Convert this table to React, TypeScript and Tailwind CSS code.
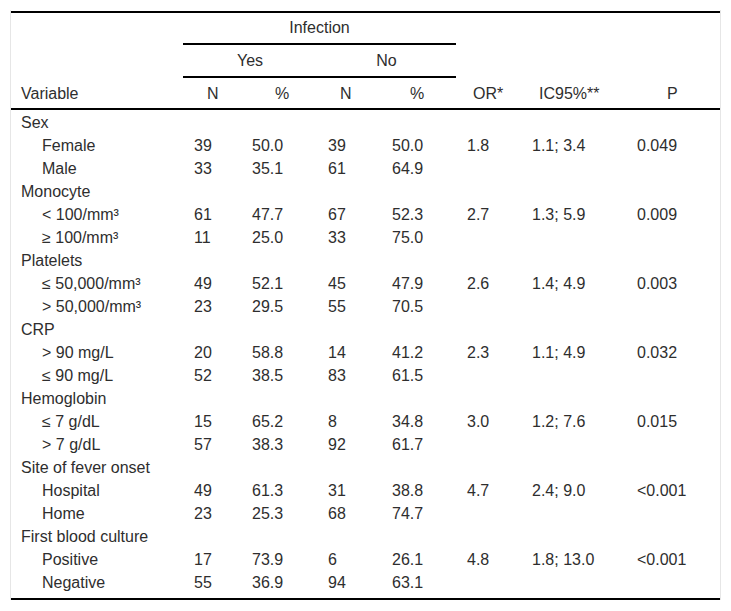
type Row = { label: string; sub?: boolean; n1?: string; p1?: string; n2?: string; p2?: string; or?: string; ic?: string; p?: string };

const rows: Row[] = [
  { label: "Sex" },
  { label: "Female", sub: true, n1: "39", p1: "50.0", n2: "39", p2: "50.0", or: "1.8", ic: "1.1; 3.4", p: "0.049" },
  { label: "Male", sub: true, n1: "33", p1: "35.1", n2: "61", p2: "64.9" },
  { label: "Monocyte" },
  { label: "< 100/mm³", sub: true, n1: "61", p1: "47.7", n2: "67", p2: "52.3", or: "2.7", ic: "1.3; 5.9", p: "0.009" },
  { label: "≥ 100/mm³", sub: true, n1: "11", p1: "25.0", n2: "33", p2: "75.0" },
  { label: "Platelets" },
  { label: "≤ 50,000/mm³", sub: true, n1: "49", p1: "52.1", n2: "45", p2: "47.9", or: "2.6", ic: "1.4; 4.9", p: "0.003" },
  { label: "> 50,000/mm³", sub: true, n1: "23", p1: "29.5", n2: "55", p2: "70.5" },
  { label: "CRP" },
  { label: "> 90 mg/L", sub: true, n1: "20", p1: "58.8", n2: "14", p2: "41.2", or: "2.3", ic: "1.1; 4.9", p: "0.032" },
  { label: "≤ 90 mg/L", sub: true, n1: "52", p1: "38.5", n2: "83", p2: "61.5" },
  { label: "Hemoglobin" },
  { label: "≤ 7 g/dL", sub: true, n1: "15", p1: "65.2", n2: "8", p2: "34.8", or: "3.0", ic: "1.2; 7.6", p: "0.015" },
  { label: "> 7 g/dL", sub: true, n1: "57", p1: "38.3", n2: "92", p2: "61.7" },
  { label: "Site of fever onset" },
  { label: "Hospital", sub: true, n1: "49", p1: "61.3", n2: "31", p2: "38.8", or: "4.7", ic: "2.4; 9.0", p: "<0.001" },
  { label: "Home", sub: true, n1: "23", p1: "25.3", n2: "68", p2: "74.7" },
  { label: "First blood culture" },
  { label: "Positive", sub: true, n1: "17", p1: "73.9", n2: "6", p2: "26.1", or: "4.8", ic: "1.8; 13.0", p: "<0.001" },
  { label: "Negative", sub: true, n1: "55", p1: "36.9", n2: "94", p2: "63.1" },
];

const cols = "grid grid-cols-[172px_58px_76px_64px_75px_65px_105px_94px]";

export default function App() {
  return (
    <div className="min-h-screen bg-white pt-[10px] pl-[10px] font-['Liberation_Sans',Arial,sans-serif] text-[16px] text-[#2e2e2e]">
      <div className="w-[711px] border-x border-[#e6e6e6] pt-px">
        <div className="border-t-2 border-black">
          {/* header row 1 */}
          <div className={cols}>
            <div className="h-[32px]" />
            <div className="col-span-4 h-[32px] border-b-2 border-black text-center leading-[30px]">Infection</div>
            <div className="col-span-3" />
          </div>
          {/* header row 2 */}
          <div className={cols}>
            <div className="h-[33px]" />
            <div className="col-span-2 h-[33px] border-b-2 border-black text-center leading-[31px]">Yes</div>
            <div className="col-span-2 h-[33px] border-b-2 border-black text-center leading-[31px]">No</div>
            <div className="col-span-3" />
          </div>
          {/* header row 3 */}
          <div className={`${cols} h-[32px] border-b-2 border-black pt-[2px] leading-[28px]`}>
            <div className="pl-[10px]">Variable</div>
            <div className="pl-[24px]">N</div>
            <div className="pl-[34px]">%</div>
            <div className="pl-[23px]">N</div>
            <div className="pl-[29px]">%</div>
            <div className="pl-[17px]">OR*</div>
            <div className="pl-[18px]">IC95%**</div>
            <div className="pl-[41px]">P</div>
          </div>
        </div>
        <div className="border-b-2 border-black pt-px pb-[4px]">
          {rows.map((r, i) => (
            <div key={i} className={`${cols} h-[23px] leading-[23px] whitespace-nowrap`}>
              <div className={r.sub ? "pl-[31px]" : "pl-[10px]"}>{r.label}</div>
              <div className="pl-[11px]">{r.n1}</div>
              <div className="pl-[11px]">{r.p1}</div>
              <div className="pl-[11px]">{r.n2}</div>
              <div className="pl-[11px]">{r.p2}</div>
              <div className="pl-[11px]">{r.or}</div>
              <div className="pl-[11px]">{r.ic}</div>
              <div className="pl-[11px]">{r.p}</div>
            </div>
          ))}
        </div>
      </div>
    </div>
  );
}
